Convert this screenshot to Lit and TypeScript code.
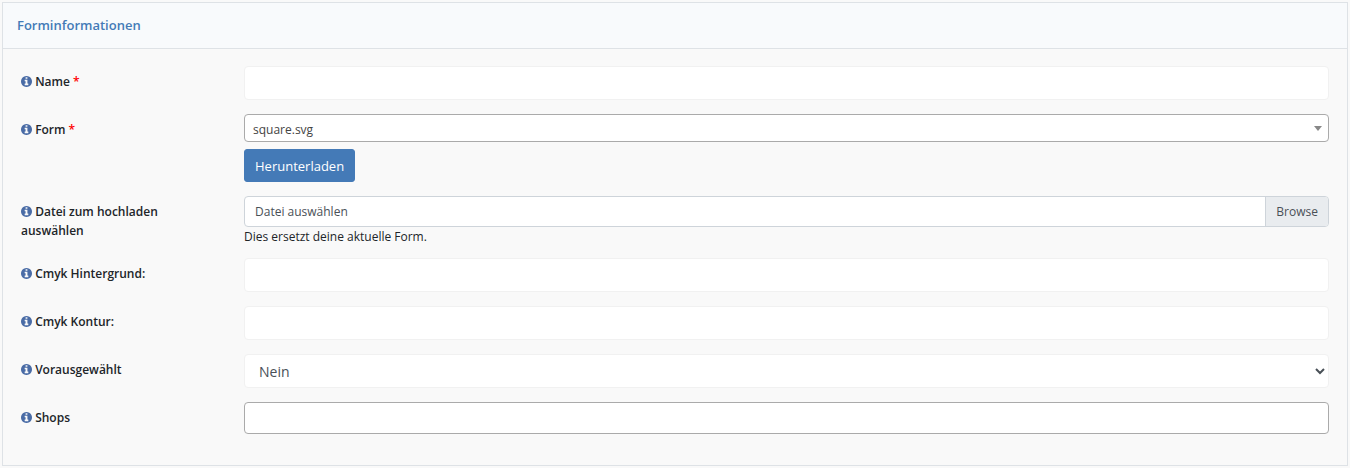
import { LitElement, html, css, svg } from "lit";
import { customElement } from "lit/decorators.js";

const infoIcon = html`<svg class="info" viewBox="0 0 1536 1536" aria-hidden="true">
  ${svg`<path d="M1024 1248v-160q0-14-9-23t-23-9h-96V544q0-14-9-23t-23-9H544q-14 0-23 9t-9 23v160q0 14 9 23t23 9h96v320h-96q-14 0-23 9t-9 23v160q0 14 9 23t23 9h448q14 0 23-9t9-23zM896 352V192q0-14-9-23t-23-9H672q-14 0-23 9t-9 23v160q0 14 9 23t23 9h192q14 0 23-9t9-23zm640 416q0 209-103 385.500T1153.500 1433 768 1536t-385.500-103T103 1153.500 0 768t103-385.500T382.500 103 768 0t385.500 103T1433 382.500 1536 768z"/>`}
</svg>`;

@customElement("app-root")
export class AppRoot extends LitElement {
  static styles = css`
    :host {
      display: block;
      padding: 2px;
      background: #f9f9f9;
      color: #212529;
      font-family: "Segoe UI", "Open Sans", "Noto Sans", sans-serif;
      font-size: 12px;
      line-height: 19px;
    }
    * {
      box-sizing: border-box;
    }
    .panel {
      border: 1px solid #dee2e6;
    }
    .title {
      margin: 0;
      padding: 13px 14px;
      border-bottom: 1px solid #dee2e6;
      background: #f8fafc;
      color: #447ab7;
      font-size: 13px;
      font-weight: 600;
      line-height: 19px;
    }
    .form {
      display: flex;
      flex-direction: column;
      gap: 14px;
      padding: 17px 3px 31px;
    }
    .row {
      display: grid;
      grid-template-columns: 1fr 5fr;
    }
    .label {
      padding: 6px 15px 0;
      font-weight: 600;
    }
    .info {
      width: 11px;
      height: 11px;
      vertical-align: -1px;
      fill: #4a6ca6;
    }
    .required {
      color: #f00;
    }
    .field {
      padding: 0 15px;
      min-width: 0;
    }
    .control {
      display: block;
      width: 100%;
      height: 34px;
      margin: 0;
      padding: 6px 12px;
      border: 1px solid #f1f1f1;
      border-radius: 4px;
      background: #fff;
      color: #495057;
      font: inherit;
      font-size: 14px;
    }
    select.control {
      padding: 0 0 0 10px;
    }
    .tags {
      height: 32px;
      border-color: #aaa;
    }
    .combo {
      position: relative;
    }
    .combo select {
      display: block;
      width: 100%;
      height: 28px;
      margin: 0;
      padding: 3px 24px 0 8px;
      border: 1px solid #aaa;
      border-radius: 4px;
      background: #fff;
      color: #444;
      font: inherit;
      appearance: none;
    }
    .caret {
      position: absolute;
      top: 12px;
      right: 7px;
      width: 8px;
      height: 5px;
      fill: #888;
      pointer-events: none;
    }
    .button {
      display: block;
      height: 33px;
      margin-top: 7px;
      padding: 2px 10px 0;
      border: 1px solid #447ab7;
      border-radius: 3px;
      background: #447ab7;
      color: #fff;
      font: inherit;
      font-size: 13px;
      cursor: pointer;
    }
    .file {
      position: relative;
      display: flex;
      height: 31px;
      border: 1px solid #ced4da;
      border-radius: 4px;
      background: #fff;
      color: #495057;
      line-height: 30px;
      overflow: hidden;
    }
    .file input {
      position: absolute;
      inset: 0;
      width: 100%;
      opacity: 0;
    }
    .file-name {
      flex: 1;
      padding: 0 10px;
    }
    .browse {
      padding: 0 10px;
      border-left: 1px solid #ced4da;
      background: #e9ecef;
    }
    .help {
      margin: 2px 0 0;
      line-height: 15px;
    }
  `;

  private label(id: string, text: string, required = false) {
    return html`<label class="label" for=${id}
      >${infoIcon} ${text}${required ? html` <span class="required">*</span>` : ""}</label
    >`;
  }

  render() {
    return html`
      <section class="panel">
        <h1 class="title">Forminformationen</h1>
        <form class="form" @submit=${(e: Event) => e.preventDefault()}>
          <div class="row">
            ${this.label("name", "Name", true)}
            <div class="field"><input class="control" id="name" type="text" required /></div>
          </div>
          <div class="row">
            ${this.label("shape", "Form", true)}
            <div class="field">
              <div class="combo">
                <select id="shape"><option>square.svg</option></select>
                <svg class="caret" viewBox="0 0 8 5" aria-hidden="true"><path d="M0 0h8L4 5z" /></svg>
              </div>
              <button class="button" type="button">Herunterladen</button>
            </div>
          </div>
          <div class="row">
            ${this.label("upload", "Datei zum hochladen auswählen")}
            <div class="field">
              <div class="file">
                <span class="file-name">Datei auswählen</span>
                <span class="browse">Browse</span>
                <input id="upload" type="file" />
              </div>
              <p class="help">Dies ersetzt deine aktuelle Form.</p>
            </div>
          </div>
          <div class="row">
            ${this.label("background", "Cmyk Hintergrund:")}
            <div class="field"><input class="control" id="background" type="text" /></div>
          </div>
          <div class="row">
            ${this.label("outline", "Cmyk Kontur:")}
            <div class="field"><input class="control" id="outline" type="text" /></div>
          </div>
          <div class="row">
            ${this.label("preselected", "Vorausgewählt")}
            <div class="field">
              <select class="control" id="preselected">
                <option>Nein</option>
                <option>Ja</option>
              </select>
            </div>
          </div>
          <div class="row">
            ${this.label("shops", "Shops")}
            <div class="field"><input class="control tags" id="shops" type="text" /></div>
          </div>
        </form>
      </section>
    `;
  }
}
